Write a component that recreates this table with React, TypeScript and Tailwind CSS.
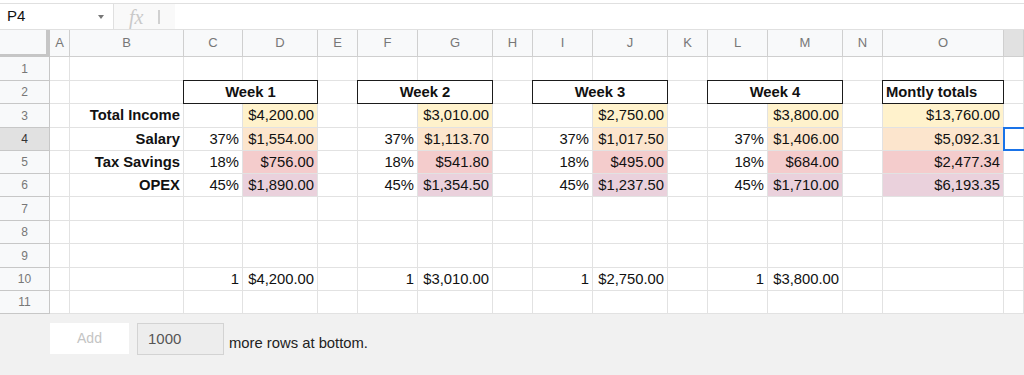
import React from 'react'

const GRID = 'grid grid-cols-[50px_20px_114px_59px_75px_40px_60px_75px_40px_60px_75px_40px_60px_75px_40px_121px_1fr]'
const COLS = ['A', 'B', 'C', 'D', 'E', 'F', 'G', 'H', 'I', 'J', 'K', 'L', 'M', 'N', 'O', 'P']
const HEIGHTS: Record<number, string> = {
  1: 'h-[24px]', 2: 'h-[23px]', 3: 'h-[24px]', 4: 'h-[23px]', 5: 'h-[23px]', 6: 'h-[23px]',
  7: 'h-[24px]', 8: 'h-[23px]', 9: 'h-[24px]', 10: 'h-[23px]', 11: 'h-[23px]',
}

type Cell = { t: string; bold?: boolean; left?: boolean; center?: boolean; bg?: string; span?: number; box?: boolean }
type Row = Record<string, Cell>

const YEL = 'bg-[#fff2cc]'
const ORG = 'bg-[#fce5cd]'
const RED = 'bg-[#f4cccc]'
const PUR = 'bg-[#ead1dc]'

function moneyRow(label: string, pct: string, vals: string[], bg: string): Row {
  const r: Row = { B: { t: label, bold: true } }
  ;['D', 'G', 'J', 'M', 'O'].forEach((c, i) => (r[c] = { t: vals[i], bg }))
  if (pct) ['C', 'F', 'I', 'L'].forEach((c) => (r[c] = { t: pct }))
  return r
}

const wk = (t: string): Cell => ({ t, bold: true, center: true, span: 2, box: true })

const ROWS: Row[] = [
  {},
  { C: wk('Week 1'), F: wk('Week 2'), I: wk('Week 3'), L: wk('Week 4'), O: { t: 'Montly totals', bold: true, left: true, box: true } },
  moneyRow('Total Income', '', ['$4,200.00', '$3,010.00', '$2,750.00', '$3,800.00', '$13,760.00'], YEL),
  moneyRow('Salary', '37%', ['$1,554.00', '$1,113.70', '$1,017.50', '$1,406.00', '$5,092.31'], ORG),
  moneyRow('Tax Savings', '18%', ['$756.00', '$541.80', '$495.00', '$684.00', '$2,477.34'], RED),
  moneyRow('OPEX', '45%', ['$1,890.00', '$1,354.50', '$1,237.50', '$1,710.00', '$6,193.35'], PUR),
  {},
  {},
  {},
  {
    C: { t: '1' }, D: { t: '$4,200.00' }, F: { t: '1' }, G: { t: '$3,010.00' },
    I: { t: '1' }, J: { t: '$2,750.00' }, L: { t: '1' }, M: { t: '$3,800.00' },
  },
  {},
]

function SheetRow({ n, row }: { n: number; row: Row }) {
  const selected = n === 4
  const cells: React.ReactNode[] = []
  let skip = 0
  COLS.forEach((c) => {
    if (skip > 0) { skip--; return }
    const cell = row[c]
    const span = cell?.span ?? 1
    skip = span - 1
    const align = cell?.center ? 'justify-center' : cell?.left ? 'justify-start' : 'justify-end'
    cells.push(
      <div
        key={c}
        className={`relative flex items-center overflow-visible whitespace-nowrap border-r border-b border-[#e2e2e2] px-[3px] ${align} ${span === 2 ? 'col-span-2' : ''} ${cell?.bg ?? 'bg-white'} ${cell?.bold ? 'font-bold' : ''}`}
      >
        {cell?.t}
        {cell?.box && <div className="pointer-events-none absolute -left-px -top-px -right-px -bottom-px border border-[#1b1b1b]" />}
        {selected && c === 'P' && <div className="pointer-events-none absolute -left-px -top-px -bottom-px -right-[10px] border-2 border-[#1a73e8]" />}
      </div>
    )
  })
  return (
    <div className={`${GRID} ${HEIGHTS[n]}`}>
      <div className={`flex items-center justify-center border-r border-b border-[#c7c7c7] text-[12px] ${selected ? 'bg-[#e1e1e1] text-[#333]' : 'bg-[#f8f9fa] text-[#777]'}`}>{n}</div>
      {cells}
    </div>
  )
}

export default function App() {
  return (
    <div className="h-[375px] w-[1024px] overflow-hidden bg-white font-['Liberation_Sans',Arial,sans-serif] text-[14.8px] text-[#111]">
      <div className="h-[3px] bg-white" />
      {/* formula bar */}
      <div className="flex h-[27px] items-stretch border-y border-[#e0e0e0]">
        <div className="flex w-[113px] items-center justify-between pl-[7px] pr-[9px]">
          <span className="text-[15px] text-[#111]">P4</span>
          <svg width="6" height="4" viewBox="0 0 6 4"><path d="M0 0h6L3 4z" fill="#777" /></svg>
        </div>
        <div className="flex w-[62px] items-center border-l border-[#e0e0e0] bg-[#f9f9f9]">
          <span className="ml-[15px] font-['Liberation_Serif',serif] text-[20px] italic leading-none text-[#c9c9c9]">fx</span>
          <span className="ml-[15px] h-[14px] w-[2px] bg-[#d0d0d0]" />
        </div>
        <div className="flex-1" />
      </div>
      {/* column headers */}
      <div className={`${GRID} h-[27px] text-[13px] text-[#777]`}>
        <div className="border-r-[4px] border-b-[3px] border-[#c6c6c6] bg-[#f8f9fa]" />
        {COLS.map((c) => (
          <div
            key={c}
            className={`flex items-center justify-center border-r border-b border-[#cfcfcf] ${c === 'P' ? 'bg-[#e1e1e1] text-[#333]' : 'bg-[#f8f9fa]'}`}
          >
            {c === 'P' ? '' : c}
          </div>
        ))}
      </div>
      {ROWS.map((row, i) => (
        <SheetRow key={i} n={i + 1} row={row} />
      ))}
      {/* add rows bar */}
      <div className="flex h-[61px] items-start bg-[#f1f1f1] pl-[50px] pt-[9px]">
        <button className="h-[31px] w-[79px] bg-white text-[14px] text-[#c4c4c4]">Add</button>
        <div className="ml-[8px] flex h-[32px] w-[87px] items-center border border-[#d3d3d3] bg-[#ededed] pl-[10px] text-[15px] text-[#555]">1000</div>
        <span className="ml-[5px] mt-[9px] text-[14.8px] text-[#222]">more rows at bottom.</span>
      </div>
    </div>
  )
}
